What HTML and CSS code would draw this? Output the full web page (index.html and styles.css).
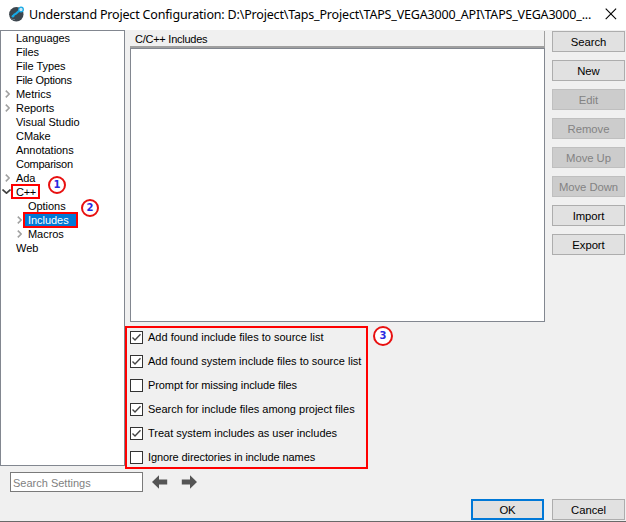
FILE: index.html
```html
<!DOCTYPE html>
<html lang="en">
<head>
<meta charset="utf-8">
<title>Understand Project Configuration</title>
<link rel="stylesheet" href="styles.css">
</head>
<body>
<div class="window">
  <header class="titlebar">
    <svg class="logo" width="17" height="16" viewBox="0 0 17 16"><circle cx="7.300" cy="8.300" r="7.200" fill="#3d464e"/><path d="M1.500 12.500 Q4 14 6 13.500" stroke="#66757e" fill="none"/><path d="M3.800 10.300 5.300 8.600 7 7.600 10.500 4.500" fill="none" stroke="#16a9e6" stroke-width="2"/><circle cx="3.900" cy="10.300" r="1.300" fill="#16a9e6"/><circle cx="12" cy="3.500" r="2.300" fill="#c9e8f5" stroke="#16a9e6" stroke-width="1.300"/></svg>
    <h1>Understand Project Configuration: D:\Project\Taps_Project\TAPS_VEGA3000_API\TAPS_VEGA3000_...</h1>
    <svg class="close" width="12" height="12" viewBox="0 0 12 12"><path d="M.7.700 11.100 11.100M11.100.700.7 11.100" stroke="#000" stroke-width="1.100"/></svg>
  </header>
  <div class="content">
    <ul class="tree">
      <li>Languages</li>
      <li>Files</li>
      <li>File Types</li>
      <li class="tight">File Options</li>
      <li><svg class="chev" viewBox="0 0 5 8"><path d="M.8.600 4.200 4 .8 7.400"/></svg>Metrics</li>
      <li><svg class="chev" viewBox="0 0 5 8"><path d="M.8.600 4.200 4 .8 7.400"/></svg>Reports</li>
      <li>Visual Studio</li>
      <li>CMake</li>
      <li>Annotations</li>
      <li class="tight">Comparison</li>
      <li><svg class="chev" viewBox="0 0 5 8"><path d="M.8.600 4.200 4 .8 7.400"/></svg>Ada</li>
      <li class="tight"><svg class="chev open" viewBox="0 0 9 5"><path d="M.5.500 4.500 4.200 8.500.5"/></svg>C++<i class="mark mark-cpp"></i><b class="step step1">1</b></li>
      <li class="sub">Options</li>
      <li class="sub"><svg class="chev" viewBox="0 0 5 8"><path d="M.8.600 4.200 4 .8 7.400"/></svg><span class="selected">Includes</span><i class="mark mark-inc"></i><b class="step step2">2</b></li>
      <li class="sub"><svg class="chev" viewBox="0 0 5 8"><path d="M.8.600 4.200 4 .8 7.400"/></svg>Macros</li>
      <li>Web</li>
    </ul>
    <main class="panel">
      <div class="heading">C/C++ Includes</div>
      <div class="list"></div>
      <div class="options">
        <div class="opt"><svg class="box" viewBox="0 0 11 11"><path d="M1.500 5.500 4 8 9.500 2.300"/></svg><span>Add found include files to source list</span></div>
        <div class="opt"><svg class="box" viewBox="0 0 11 11"><path d="M1.500 5.500 4 8 9.500 2.300"/></svg><span>Add found system include files to source list</span></div>
        <div class="opt tight"><svg class="box" viewBox="0 0 11 11"></svg><span>Prompt for missing include files</span></div>
        <div class="opt"><svg class="box" viewBox="0 0 11 11"><path d="M1.500 5.500 4 8 9.500 2.300"/></svg><span>Search for include files among project files</span></div>
        <div class="opt"><svg class="box" viewBox="0 0 11 11"><path d="M1.500 5.500 4 8 9.500 2.300"/></svg><span>Treat system includes as user includes</span></div>
        <div class="opt tight"><svg class="box" viewBox="0 0 11 11"></svg><span>Ignore directories in include names</span></div>
        <i class="mark mark-opts"></i><b class="step step3">3</b>
      </div>
    </main>
    <div class="actions">
      <button>Search</button>
      <button>New</button>
      <button disabled>Edit</button>
      <button disabled>Remove</button>
      <button disabled>Move Up</button>
      <button disabled>Move Down</button>
      <button>Import</button>
      <button>Export</button>
    </div>
  </div>
  <div class="searchbar">
    <input type="text" placeholder="Search Settings">
    <svg class="arrow" viewBox="0 0 16 14"><path d="M0 7 7 .3V4.500H15.200V9.500H7V13.700Z"/></svg>
    <svg class="arrow flip" viewBox="0 0 16 14"><path d="M0 7 7 .3V4.500H15.200V9.500H7V13.700Z"/></svg>
  </div>
  <footer class="footer">
    <button class="primary">OK</button>
    <button>Cancel</button>
  </footer>
</div>
</body>
</html>
```
FILE: styles.css
```css
* { box-sizing: border-box; }
body { margin: 0; font: 11px/14px "Liberation Sans", Arial, sans-serif; color: #000; }
.window { width: 626px; height: 522px; display: flex; flex-direction: column; background: #f0f0f0; border-bottom: 1px solid #696969; overflow: hidden; }
.titlebar { height: 30px; flex: none; display: flex; align-items: center; background: #fff; padding: 0 9px 2px 9px; }
.logo { flex: none; margin-right: 3px; }
h1 { margin: 0; flex: 1; padding-top: 1px; font: 400 12.5px/18px "Noto Sans", sans-serif; white-space: nowrap; letter-spacing: -0.18px; }
.close { flex: none; }
.content { height: 439px; flex: none; display: flex; }
.tree { list-style: none; margin: 0; padding: 0; width: 125px; height: 436px; background: #fff; border: 1px solid #828790; }
.tree li { position: relative; height: 14px; padding-left: 15px; white-space: nowrap; letter-spacing: -0.04px; }
.tree li.tight { letter-spacing: -0.25px; }
.tree li.sub { padding-left: 27px; }
.chev { position: absolute; left: 4px; top: 3px; width: 5px; height: 8px; fill: none; stroke: #a0a0a0; stroke-width: 1.6; }
.sub .chev { left: 16px; }
.chev.open { left: 1px; top: 4px; width: 9px; height: 5px; stroke: #404040; }
.selected { display: inline-block; margin-left: -3px; padding-left: 3px; width: 51px; height: 14px; background: #0078d7; color: #fff; }
.mark { position: absolute; border: 2px solid #f00; pointer-events: none; }
.mark-cpp { left: 10px; top: -1px; width: 29px; height: 15px; }
.mark-inc { left: 22px; top: -1px; width: 55px; height: 16px; }
.step { position: absolute; width: 18px; height: 18px; border: 2px solid #e81010; border-radius: 50%; background: #fff; color: #2929e0; font: bold 10px/14px "DejaVu Sans", sans-serif; text-align: center; letter-spacing: 0; }
.step1 { left: 47px; top: -9px; }
.step2 { left: 80px; top: -14px; }
.panel { width: 415px; margin-left: 5px; padding-top: 1px; }
.heading { height: 17px; padding-left: 5px; line-height: 16px; border-bottom: 2px solid #a0a0a0; border-right: 1px solid #a0a0a0; letter-spacing: -0.25px; }
.list { height: 274px; background: #fff; border: 1px solid #828790; }
.options { position: relative; padding-top: 3px; }
.opt { height: 24px; display: flex; align-items: center; gap: 5px; white-space: nowrap; letter-spacing: 0; }
.opt.tight { letter-spacing: -0.1px; }
.box { width: 13px; height: 13px; background: #fff; border: 1px solid #333; fill: none; stroke: #444; stroke-width: 1.4; }
.mark-opts { left: -5px; top: 4px; width: 243px; height: 143px; }
.step3 { left: 243px; top: 4px; width: 20px; height: 20px; line-height: 16px; }
.actions { width: 73px; margin: 1px 0 0 7px; display: flex; flex-direction: column; gap: 8px; }
button { display: block; width: 73px; height: 21px; padding: 2px 0 0; background: #e1e1e1; border: 1px solid #adadad; border-radius: 0; color: #000; font: 11.3px/17px "Liberation Sans", Arial, sans-serif; letter-spacing: -0.05px; }
button:disabled { background: #ccc; border-color: #bfbfbf; color: #838383; }
.searchbar { height: 30px; flex: none; display: flex; align-items: flex-start; padding: 3px 0 0 10px; }
input { width: 133px; height: 20px; padding: 1px 2px 0; border: 1px solid #7a7a7a; background: #fff; border-radius: 0; font: 11px "Liberation Sans", Arial, sans-serif; }
input::placeholder { color: #7f7f7f; opacity: 1; }
.arrow { width: 16px; height: 14px; margin: 3px 0 0 9px; fill: #555; }
.arrow.flip { margin-left: 13px; transform: scaleX(-1); }
.footer { flex: none; display: flex; justify-content: flex-end; gap: 8px; padding-right: 1px; }
.primary { border: 2px solid #0078d7; line-height: 15px; }
```
